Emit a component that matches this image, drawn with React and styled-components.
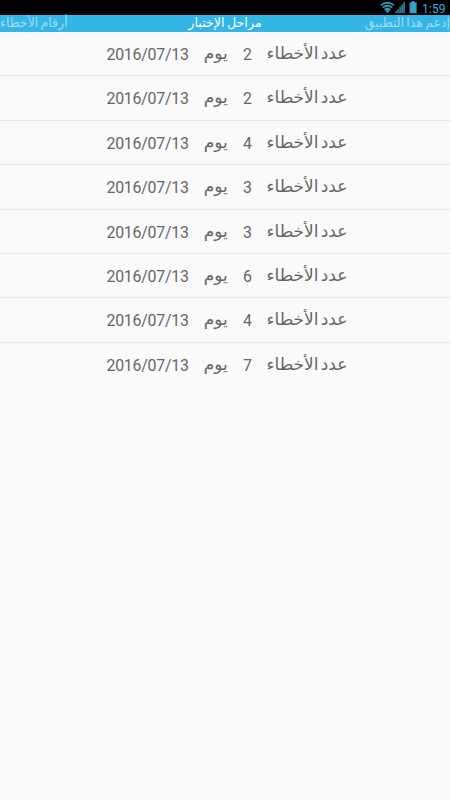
import React from 'react';
import styled, { createGlobalStyle } from 'styled-components';

const GlobalStyle = createGlobalStyle`
  body {
    margin: 0;
    background: #fafafa;
    font-family: Roboto, 'DejaVu Sans', sans-serif;
  }
`;

const Screen = styled.div`
  display: flex;
  flex-direction: column;
  width: 450px;
  height: 800px;
  overflow: hidden;
  background: #fafafa;
`;

const StatusBar = styled.div`
  display: flex;
  justify-content: flex-end;
  flex: none;
  height: 15px;
  background: #000;
`;

const StatusIcons = styled.svg`
  display: block;
  width: 41px;
  height: 15px;
`;

const Clock = styled.span`
  width: 29px;
  padding: 2px 0 0 1px;
  box-sizing: border-box;
  color: #33b0de;
  font-size: 12px;
  letter-spacing: 0.15px;
  line-height: 14px;
  white-space: nowrap;
`;

const TabStrip = styled.nav`
  display: grid;
  grid-template-columns: 1fr auto 1fr;
  flex: none;
  height: 17px;
  background: #33b5e5;
`;

const Tab = styled.span`
  justify-self: ${props => props.$side};
  color: ${props => (props.$active ? '#fff' : '#a3ddf4')};
  font-size: ${props => (props.$active ? 12.7 : 12.5)}px;
  line-height: 15px;
  word-spacing: -0.8px;
  white-space: nowrap;
`;

const List = styled.ul`
  margin: 0;
  padding: 0;
  list-style: none;
`;

const Row = styled.li`
  display: grid;
  grid-template-columns: 82px 24px 9px 80px;
  column-gap: 15.3px;
  height: 44.4px;
  padding-left: 106.5px;
  box-sizing: border-box;
  border-bottom: 1px solid #e7e7e7;
  color: #666;

  &:last-child {
    border-bottom-color: transparent;
  }
`;

const Value = styled.span`
  font-size: 15.9px;
  letter-spacing: -0.25px;
  line-height: 46px;
  white-space: nowrap;
`;

const Label = styled.span`
  font-size: 17px;
  line-height: 43px;
  word-spacing: -2px;
  white-space: nowrap;
`;

const results = [2, 2, 4, 3, 3, 6, 4, 7];

function Icons() {
  return (
    <StatusIcons viewBox="0 0 41 15">
      <g fill="#338fb3">
        {/* wifi */}
        <path d="M0.4 4.6Q7.5 -1.2 14.6 4.6L13.5 6Q7.5 1.4 1.5 6Z" />
        <path d="M2.2 6.8Q7.5 2.8 12.8 6.8L11.7 8.2Q7.5 5.2 3.3 8.2Z" />
        <path d="M4 9Q7.5 6.5 11 9L7.5 13.2Z" />
        {/* signal */}
        <path d="M15.3 11h1.5v2h-1.5zM17.3 9h1.5v4h-1.5zM19.3 6.8h1.5v6.2h-1.5zM21.3 4.5h1.5v8.5h-1.5zM23.3 2.2h1.5v10.8h-1.5z" />
        {/* battery */}
        <path d="M31.3 1.3h3.6v1.2h1.7v10.7h-7v-10.7h1.7z" fill="#3a9cc4" />
      </g>
    </StatusIcons>
  );
}

function ResultRow({ count }) {
  return (
    <Row>
      <Value>2016/07/13</Value>
      <Label dir="rtl" lang="ar">
        يوم
      </Label>
      <Value>{count}</Value>
      <Label dir="rtl" lang="ar">
        عدد الأخطاء
      </Label>
    </Row>
  );
}

export default function App() {
  return (
    <Screen>
      <GlobalStyle />
      <StatusBar>
        <Icons />
        <Clock>1:59</Clock>
      </StatusBar>
      <TabStrip lang="ar">
        <Tab dir="rtl" $side="left">
          أرقام الأخطاء
        </Tab>
        <Tab dir="rtl" $side="center" $active>
          مراحل الإختبار
        </Tab>
        <Tab dir="rtl" $side="right">
          إدعم هذا التطبيق
        </Tab>
      </TabStrip>
      <List>
        {results.map((count, index) => (
          <ResultRow key={index} count={count} />
        ))}
      </List>
    </Screen>
  );
}
